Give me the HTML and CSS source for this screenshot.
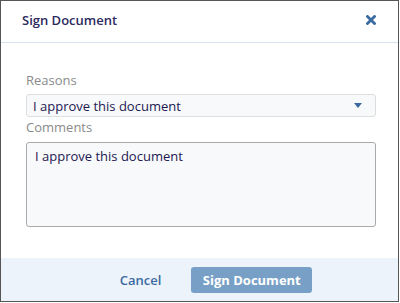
FILE: index.html
```html
<!DOCTYPE html>
<html lang="en">
<head>
    <meta charset="UTF-8">
    <meta name="viewport" content="width=device-width, initial-scale=1.0">
    <title>Sign Document</title>
    <link rel="stylesheet" href="styles.css">
</head>
<body>

<div class="modal">
    <div class="modal-header">
        <h2>Sign Document</h2>
        <button class="close-btn" aria-label="Close">
            <svg width="10" height="10" viewBox="0 0 10 10">
                <path d="M1.5 1.5 L8.5 8.5 M8.5 1.5 L1.5 8.5" stroke="#3b6aa0" stroke-width="2.8" stroke-linecap="square"/>
            </svg>
        </button>
    </div>

    <div class="modal-body">
        <label class="field-label">Reasons</label>
        <div class="select-box">
            <span>I approve this document</span>
            <svg width="8" height="5" viewBox="0 0 8 5"><path d="M0 0 H8 L4 5 Z" fill="#3b6aa0"/></svg>
        </div>
        <label class="field-label">Comments</label>
        <div class="comment-box">I approve this document</div>
    </div>

    <div class="modal-footer">
        <button class="btn-cancel">Cancel</button>
        <button class="btn-sign">Sign Document</button>
    </div>
</div>

</body>
</html>
```

FILE: styles.css
```css
body {
    margin: 0;
    font-family: "Open Sans", "Noto Sans", sans-serif;
    font-size: 13px;
    background: #fff;
}
.modal {
    width: 399px;
    height: 302px;
    box-sizing: border-box;
    border: 1px solid #555;
    display: flex;
    flex-direction: column;
}
.modal-header {
    height: 42px;
    box-sizing: border-box;
    border-bottom: 1px solid #d5e1ec;
    display: flex;
    align-items: center;
    justify-content: space-between;
    padding: 0 22px 4px 21px;
}
.modal-header h2 {
    margin: 0;
    font-size: 13px;
    font-weight: 600;
    color: #2c2a5e;
}
.close-btn {
    border: none;
    background: none;
    padding: 0;
    display: flex;
}
.modal-body {
    flex: 1;
    padding: 28px 22px 0 25px;
}
.field-label {
    display: block;
    color: #8a8a8a;
    line-height: 18px;
}
.select-box {
    height: 21px;
    margin-top: 5px;
    margin-bottom: 1px;
    border: 1px solid #dedede;
    border-radius: 3px;
    background: #f8f9fa;
    display: flex;
    align-items: center;
    justify-content: space-between;
    padding: 0 13px 0 6px;
    color: #231852;
}
.comment-box {
    height: 85px;
    box-sizing: border-box;
    margin-top: 6px;
    border: 1px solid #aaa;
    border-radius: 3px;
    background: #f8f9fb;
    color: #231852;
    padding: 4px 8px;
}
.modal-footer {
    height: 43px;
    background: #ecf3fa;
    display: flex;
    align-items: center;
    justify-content: center;
    gap: 30px;
    padding-left: 33px;
}
.btn-cancel {
    border: none;
    background: none;
    font-family: inherit;
    font-size: 13px;
    font-weight: 600;
    color: #3b6aa0;
    padding: 0;
}
.btn-sign {
    width: 121px;
    height: 26px;
    border: none;
    border-radius: 3px;
    background: #789fc5;
    color: #fff;
    font-family: inherit;
    font-size: 13px;
    font-weight: 700;
}
```
